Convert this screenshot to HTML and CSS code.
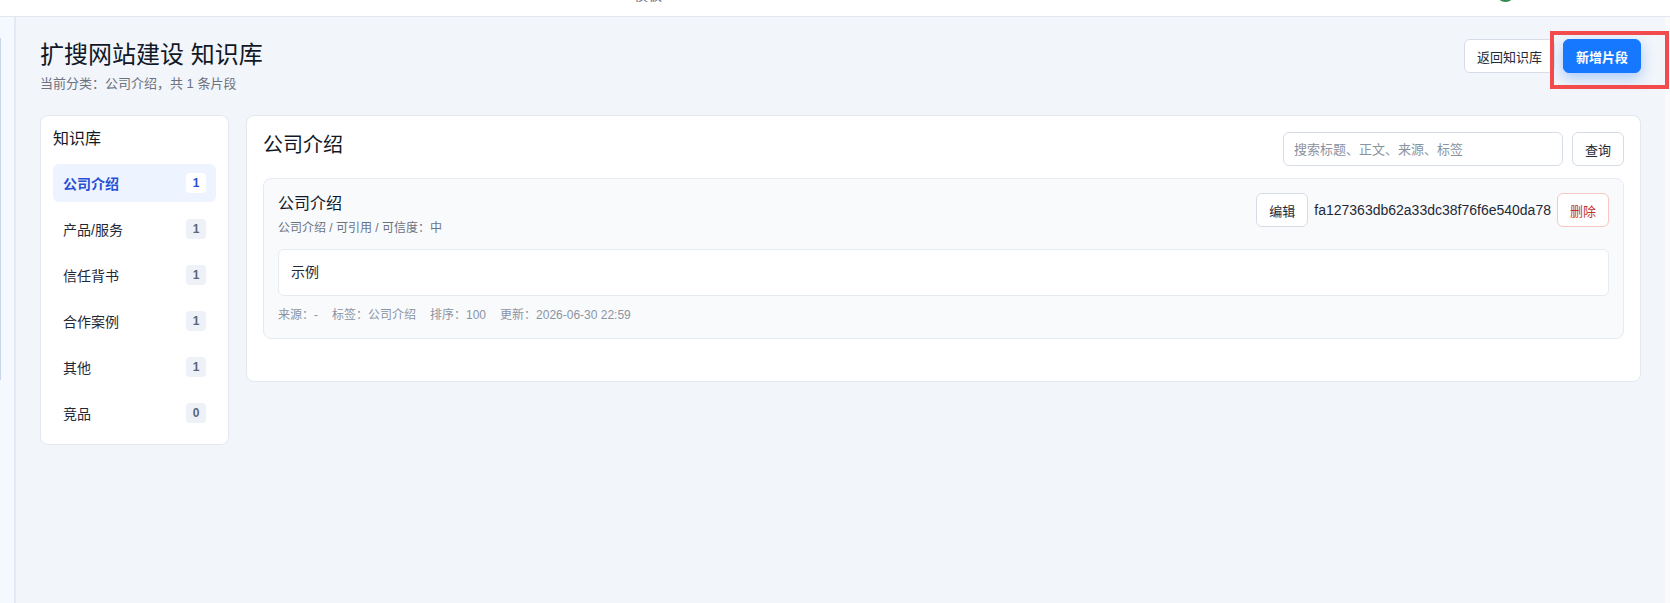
FILE: index.html
```html
<!DOCTYPE html>
<html lang="zh-CN">
<head>
    <meta charset="UTF-8">
    <meta name="viewport" content="width=device-width, initial-scale=1.0">
    <title>扩搜网站建设 知识库</title>
    <link rel="stylesheet" href="styles.css">
</head>
<body>

    <div class="topbar">
        <div class="topbar-inner">
            <span class="topbar-brand"></span>
            <span class="topbar-nav">模板</span>
            <span class="topbar-fill"></span>
            <span class="avatar"></span>
            <span class="topbar-user"></span>
        </div>
    </div>

    <div class="layout">
        <aside class="rail">
            <span class="rail-track"></span>
        </aside>

        <main class="main">
            <div class="page-head">
                <div>
                    <h1 class="page-title">扩搜网站建设 知识库</h1>
                    <p class="page-sub">当前分类：公司介绍，共 1 条片段</p>
                </div>
                <div class="head-actions">
                    <button class="btn">返回知识库</button>
                    <button class="btn btn-primary">新增片段</button>
                    <span class="focus-mark"></span>
                </div>
            </div>

            <div class="board">
                <section class="card cats">
                    <h3 class="cats-title">知识库</h3>
                    <ul class="cat-list">
                        <li class="cat active"><span>公司介绍</span><b class="count">1</b></li>
                        <li class="cat"><span>产品/服务</span><b class="count">1</b></li>
                        <li class="cat"><span>信任背书</span><b class="count">1</b></li>
                        <li class="cat"><span>合作案例</span><b class="count">1</b></li>
                        <li class="cat"><span>其他</span><b class="count">1</b></li>
                        <li class="cat"><span>竞品</span><b class="count">0</b></li>
                    </ul>
                </section>

                <section class="card snippets">
                    <div class="snippets-head">
                        <h2 class="snippets-title">公司介绍</h2>
                        <div class="search">
                            <input type="text" class="search-input" placeholder="搜索标题、正文、来源、标签">
                            <button class="btn">查询</button>
                        </div>
                    </div>

                    <div class="snippet">
                        <div class="snippet-head">
                            <div>
                                <div class="snippet-title">公司介绍</div>
                                <div class="snippet-meta">公司介绍 / 可引用 / 可信度：中</div>
                            </div>
                            <div class="snippet-actions">
                                <button class="btn">编辑</button>
                                <span class="snippet-id">fa127363db62a33dc38f76f6e540da78</span>
                                <button class="btn btn-danger">删除</button>
                            </div>
                        </div>
                        <div class="snippet-body">示例</div>
                        <div class="snippet-foot">
                            <span>来源：-</span>
                            <span>标签：公司介绍</span>
                            <span>排序：100</span>
                            <span>更新：2026-06-30 22:59</span>
                        </div>
                    </div>
                </section>
            </div>
        </main>

        <div class="gutter"></div>
    </div>

</body>
</html>
```

FILE: styles.css
```css
* {
    box-sizing: border-box;
}

body {
    margin: 0;
    font-family: "Liberation Sans", "Noto Sans CJK SC", sans-serif;
    color: #1f2937;
    background: #f2f5fa;
}

button,
input {
    font-family: inherit;
}

/* top navigation, scrolled mostly out of view */
.topbar {
    height: 17px;
    background: #fff;
    border-bottom: 1px solid #e2e7ef;
    overflow: hidden;
}

.topbar-inner {
    display: flex;
    align-items: flex-end;
    height: 40px;
    margin-top: -38px;
}

.topbar-brand {
    width: 634px;
}

.topbar-nav {
    font-size: 14px;
    line-height: 13px;
    color: #64748b;
}

.topbar-fill {
    flex: 1;
}

.avatar {
    width: 19px;
    height: 19px;
    border-radius: 50%;
    background: #2f8a4e;
}

.topbar-user {
    width: 155px;
}

.layout {
    display: flex;
    min-height: calc(100vh - 17px);
}

.rail {
    width: 16px;
    background: #f5f8fe;
    border-right: 2px solid #e2e9f5;
    padding-top: 21px;
}

.rail-track {
    display: block;
    height: 342px;
    border-left: 1px solid #c8d6ec;
}

.main {
    flex: 1;
    padding: 22px 24px 24px;
}

.gutter {
    width: 5px;
    background: #fafafa;
}

/* page header */
.page-head {
    display: flex;
    justify-content: space-between;
    align-items: flex-start;
}

.page-title {
    margin: 0;
    font-size: 24px;
    line-height: 32px;
    font-weight: 400;
    color: #111827;
}

.page-sub {
    margin: 4px 0 0;
    font-size: 13px;
    line-height: 18px;
    color: #6b7280;
}

.head-actions {
    position: relative;
    display: flex;
    gap: 8px;
}

.btn {
    height: 34px;
    padding: 0 12px;
    font-size: 13px;
    color: #1f2937;
    background: #fff;
    border: 1px solid #d6dce5;
    border-radius: 6px;
    cursor: pointer;
}

.btn-primary {
    width: 78px;
    color: #fff;
    font-weight: 700;
    background: #1677ff;
    border-color: #1677ff;
    box-shadow: 0 5px 14px rgba(22, 119, 255, 0.34);
}

.btn-danger {
    color: #c2352b;
    border-color: #f6c7c3;
}

/* red outline drawn round the add button */
.focus-mark {
    position: absolute;
    top: -8px;
    right: -28px;
    width: 119px;
    height: 58px;
    border: 4px solid #f24b4d;
    pointer-events: none;
}

/* two columns */
.board {
    display: flex;
    align-items: flex-start;
    gap: 17px;
    margin-top: 22px;
}

.card {
    background: #fff;
    border: 1px solid #e3e8f0;
    border-radius: 8px;
}

.cats {
    width: 189px;
    flex-shrink: 0;
    padding: 12px;
}

.cats-title {
    margin: 0;
    font-size: 16px;
    line-height: 22px;
    font-weight: 400;
    color: #111827;
}

.cat-list {
    list-style: none;
    margin: 14px 0 0;
    padding: 0;
    display: flex;
    flex-direction: column;
    gap: 8px;
}

.cat {
    display: flex;
    justify-content: space-between;
    align-items: center;
    height: 38px;
    padding: 0 10px;
    font-size: 14px;
    color: #1f2937;
    border-radius: 6px;
}

.cat .count {
    min-width: 20px;
    height: 20px;
    line-height: 20px;
    text-align: center;
    font-size: 12px;
    color: #5b6778;
    background: #eef2f8;
    border-radius: 4px;
}

.cat.active {
    background: #edf4ff;
    color: #2a4fd7;
    font-weight: 700;
}

.cat.active .count {
    background: #fff;
    color: #2a4fd7;
}

.snippets {
    flex: 1;
    padding: 16px 16px 42px;
}

.snippets-head {
    display: flex;
    justify-content: space-between;
    align-items: flex-start;
}

.snippets-title {
    margin: 0;
    font-size: 20px;
    line-height: 26px;
    font-weight: 400;
    color: #111827;
}

.search {
    display: flex;
    gap: 9px;
}

.search-input {
    width: 280px;
    height: 34px;
    padding: 0 10px;
    font-size: 13px;
    border: 1px solid #d6dce5;
    border-radius: 6px;
    outline: none;
}

.search-input::placeholder {
    color: #8a93a0;
}

.snippet {
    margin-top: 12px;
    padding: 14px;
    background: #f9fafc;
    border: 1px solid #e6ebf2;
    border-radius: 8px;
}

.snippet-head {
    display: flex;
    justify-content: space-between;
    align-items: flex-start;
}

.snippet-title {
    font-size: 16px;
    line-height: 22px;
    color: #111827;
}

.snippet-meta {
    margin-top: 4px;
    font-size: 12px;
    line-height: 18px;
    color: #6b7280;
}

.snippet-actions {
    display: flex;
    align-items: center;
    gap: 6px;
}

.snippet-id {
    font-size: 14px;
    color: #1f2937;
}

.snippet-body {
    margin-top: 12px;
    padding: 12px;
    font-size: 14px;
    line-height: 21px;
    color: #1f2937;
    background: #fff;
    border: 1px solid #e6ebf2;
    border-radius: 6px;
}

.snippet-foot {
    display: flex;
    gap: 14px;
    margin-top: 10px;
    font-size: 12px;
    line-height: 18px;
    color: #8a94a3;
}
```
